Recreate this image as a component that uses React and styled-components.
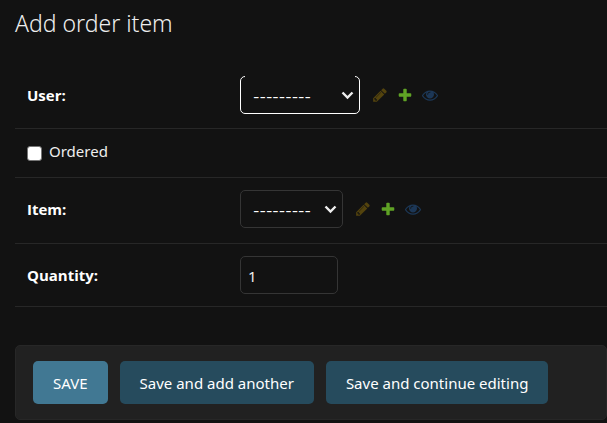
import React from "react";
import styled, { createGlobalStyle, css } from "styled-components";

const GlobalStyle = createGlobalStyle`
  * { box-sizing: border-box; }
  body {
    margin: 0;
    background: #121212;
    color: #eeeeee;
    font-family: "Noto Sans", "Open Sans", sans-serif;
    font-size: 15px;
    line-height: 20px;
  }
`;

const Page = styled.main`
  padding: 7px 0 0 15px;
`;

const Title = styled.h1`
  margin: 0 0 25px;
  font-size: 23px;
  line-height: 32px;
  font-weight: 300;
`;

const Row = styled.div`
  display: flex;
  align-items: center;
  padding: 12px 12px ${(p) => p.$bottom || 12}px;
  border-bottom: 1px solid #272727;
`;

const CheckboxRow = styled(Row)`
  padding: 12px 12px 16px;
`;

const Label = styled.label`
  width: 213px;
  flex-shrink: 0;
  color: #ffffff;
  font-family: "Open Sans", sans-serif;
  font-weight: 700;
`;

const SelectWrap = styled.span`
  position: relative;
  display: inline-flex;

  ${(p) =>
    p.$active &&
    css`
      &::after {
        content: "";
        position: absolute;
        top: 0;
        left: 5px;
        right: 5px;
        height: 1px;
        background: #121212;
      }
    `}
`;

const Select = styled.select`
  appearance: none;
  width: ${(p) => (p.$wide ? 120 : 103)}px;
  height: 38px;
  padding: 2px 12px 0;
  border: 1px solid ${(p) => (p.$active ? "#ffffff" : "#353535")};
  border-radius: 5px;
  background: #121212;
  color: #ffffff;
  font: 14px Inter, sans-serif;
  outline: none;
`;

const Chevron = styled.svg`
  position: absolute;
  right: 6px;
  top: 13px;
  pointer-events: none;
`;

const NumberInput = styled.input`
  width: 98px;
  height: 38px;
  padding: 2px 7px 0;
  border: 1px solid #353535;
  border-radius: 5px;
  background: #121212;
  color: #eeeeee;
  font: inherit;
  appearance: textfield;
  outline: none;
  &::-webkit-inner-spin-button { appearance: none; }
`;

const Related = styled.div`
  display: flex;
  gap: 9px;
  margin-left: 12px;
`;

const IconButton = styled.button`
  display: flex;
  padding: 0;
  border: 0;
  background: none;
  opacity: ${(p) => (p.disabled ? 0.4 : 1)};
`;

const Checkbox = styled.input`
  width: 15px;
  height: 15px;
  margin: 5px 7px 0 0;
  appearance: none;
  border: 1px solid #767676;
  border-radius: 3px;
  background: #ffffff;
  &:checked { background: #417893; }
`;

const SubmitRow = styled.div`
  display: flex;
  flex-wrap: wrap;
  gap: 12px;
  margin-top: 38px;
  padding: 15px 17px;
  border: 1px solid #272727;
  border-radius: 5px;
  background: #212121;
`;

const Button = styled.button`
  height: 43px;
  padding: 0 20px;
  border: 0;
  border-radius: 5px;
  background: ${(p) => (p.$primary ? "#417893" : "#264b5d")};
  color: #ffffff;
  font: inherit;
`;

const icons = {
  change: {
    fill: "#b48c08",
    d: "M491 1536l91-91-235-235-91 91v107h128v128h107zm523-928q0-22-22-22-10 0-17 7l-542 542q-7 7-7 17 0 22 22 22 10 0 17-7l542-542q7-7 7-17zm-54-192l416 416-832 832h-416v-416zm683 96q0 53-37 90l-166 166-416-416 166-165q36-38 90-38 53 0 91 38l235 234q37 39 37 91z",
  },
  add: {
    fill: "#5fa225",
    d: "M1600 796v192q0 40-28 68t-68 28h-416v416q0 40-28 68t-68 28h-192q-40 0-68-28t-28-68v-416h-416q-40 0-68-28t-28-68v-192q0-40 28-68t68-28h416v-416q0-40 28-68t68-28h192q40 0 68 28t28 68v416h416q40 0 68 28t28 68z",
  },
  view: {
    fill: "#2b70bf",
    d: "M1664 960q-152-236-381-353 61 104 61 225 0 185-131.500 316.500t-316.500 131.500-316.500-131.500-131.500-316.500q0-121 61-225-229 117-381 353 133 205 333.500 326.500t434.500 121.500 434.500-121.500 333.500-326.500zm-720-384q0-20-14-34t-34-14q-125 0-214.500 89.500t-89.500 214.500q0 20 14 34t34 14 34-14 14-34q0-86 61-147t147-61q20 0 34-14t14-34zm848 384q0 34-20 69-140 230-376.500 368.500t-499.500 138.500-499.500-139-376.500-368q-20-35-20-69t20-69q140-229 376.500-368t499.500-139 499.500 139 376.500 368q20 35 20 69z",
  },
};

function Icon({ name }) {
  return (
    <svg width="16" height="16" viewBox="0 0 1792 1792" aria-hidden="true">
      <path fill={icons[name].fill} d={icons[name].d} />
    </svg>
  );
}

function RelatedSelect({ id, noun, wide, active }) {
  return (
    <>
      <SelectWrap $active={active}>
        <Select id={id} $wide={wide} $active={active}>
          <option>---------</option>
        </Select>
        <Chevron width="13" height="12" viewBox="0 0 13 12" aria-hidden="true">
          <path d="M1.500 3.500 L6.500 8.500 L11.500 3.500" fill="none" stroke="#eeeeee" strokeWidth="2.400" />
        </Chevron>
      </SelectWrap>
      <Related>
        <IconButton type="button" disabled aria-label={`Change selected ${noun}`}>
          <Icon name="change" />
        </IconButton>
        <IconButton type="button" aria-label={`Add another ${noun}`}>
          <Icon name="add" />
        </IconButton>
        <IconButton type="button" disabled aria-label={`View selected ${noun}`}>
          <Icon name="view" />
        </IconButton>
      </Related>
    </>
  );
}

export default function App() {
  return (
    <>
      <GlobalStyle />
      <Page>
        <Title>Add order item</Title>
        <form onSubmit={(e) => e.preventDefault()}>
          <Row $bottom={14}>
            <Label htmlFor="user">User:</Label>
            <RelatedSelect id="user" noun="user" wide active />
          </Row>
          <CheckboxRow>
            <Checkbox type="checkbox" id="ordered" />
            <label htmlFor="ordered">Ordered</label>
          </CheckboxRow>
          <Row $bottom={15}>
            <Label htmlFor="item">Item:</Label>
            <RelatedSelect id="item" noun="item" />
          </Row>
          <Row>
            <Label htmlFor="quantity">Quantity:</Label>
            <NumberInput id="quantity" type="number" defaultValue="1" />
          </Row>
          <SubmitRow>
            <Button type="submit" $primary>SAVE</Button>
            <Button type="submit">Save and add another</Button>
            <Button type="submit">Save and continue editing</Button>
          </SubmitRow>
        </form>
      </Page>
    </>
  );
}
